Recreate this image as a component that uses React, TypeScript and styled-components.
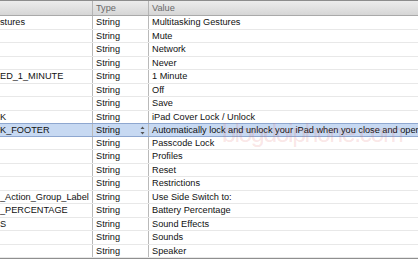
import styled, { createGlobalStyle } from "styled-components";

const GlobalStyle = createGlobalStyle`
  html, body { margin: 0; padding: 0; background: #ffffff; }
  body { width: 418px; height: 260px; overflow: hidden; }
`;

type Row = { key: string; type: string; value: string; selected?: boolean };

const rows: Row[] = [
  { key: "stures", type: "String", value: "Multitasking Gestures" },
  { key: "", type: "String", value: "Mute" },
  { key: "", type: "String", value: "Network" },
  { key: "", type: "String", value: "Never" },
  { key: "ED_1_MINUTE", type: "String", value: "1 Minute" },
  { key: "", type: "String", value: "Off" },
  { key: "", type: "String", value: "Save" },
  { key: "K", type: "String", value: "iPad Cover Lock / Unlock" },
  { key: "K_FOOTER", type: "String", value: "Automatically lock and unlock your iPad when you close and open the iPad cover.", selected: true },
  { key: "", type: "String", value: "Passcode Lock" },
  { key: "", type: "String", value: "Profiles" },
  { key: "", type: "String", value: "Reset" },
  { key: "", type: "String", value: "Restrictions" },
  { key: "_Action_Group_Label", type: "String", value: "Use Side Switch to:" },
  { key: "_PERCENTAGE", type: "String", value: "Battery Percentage" },
  { key: "S", type: "String", value: "Sound Effects" },
  { key: "", type: "String", value: "Sounds" },
  { key: "", type: "String", value: "Speaker" },
];

const Table = styled.div`
  position: relative;
  width: 418px;
  height: 260px;
  overflow: hidden;
  font-family: "Liberation Sans", Arial, sans-serif;
  font-size: 9.2px;
  color: #111;
  background: #fff;
`;

const Header = styled.div`
  display: grid;
  grid-template-columns: 92px 56px 1fr;
  height: 14px;
  border-top: 1px solid #8c8c8c;
  border-bottom: 1px solid #a9a9a9;
  background: linear-gradient(#ececec, #d6d6d6);
`;

const HeaderCell = styled.div<{ $first?: boolean }>`
  padding-left: 3px;
  line-height: 14px;
  color: #6a6a6a;
  border-left: ${(p) => (p.$first ? "none" : "1px solid #b4b4b4")};
`;

const Body = styled.div`
  display: flex;
  flex-direction: column;
  border-bottom: 1px solid #8f8f8f;
`;

const RowLine = styled.div<{ $selected?: boolean }>`
  display: grid;
  grid-template-columns: 92px 56px 1fr;
  height: 13.5px;
  box-sizing: border-box;
  border-bottom: 1px solid ${(p) => (p.$selected ? "#8ea7d0" : "#e8e8e8")};
  border-top: ${(p) => (p.$selected ? "1px solid #8ea7d0" : "none")};
  margin-top: ${(p) => (p.$selected ? "-1px" : "0")};
  background: ${(p) => (p.$selected ? "#c7d9f2" : "#fff")};
`;

const Cell = styled.div<{ $first?: boolean; $pad?: number }>`
  position: relative;
  padding-left: ${(p) => p.$pad ?? 3}px;
  line-height: 12.5px;
  white-space: nowrap;
  overflow: hidden;
  border-left: ${(p) => (p.$first ? "none" : "1px solid #b9b9b9")};
`;

const Stepper = styled.svg`
  position: absolute;
  right: 3px;
  top: 2px;
`;

const Watermark = styled.div`
  position: absolute;
  left: 222px;
  top: 119px;
  font-family: "Liberation Sans", sans-serif;
  font-size: 25px;
  letter-spacing: -1.5px;
  color: rgba(225, 110, 110, 0.18);
  pointer-events: none;
  white-space: nowrap;
`;

export default function App() {
  return (
    <Table>
      <GlobalStyle />
      <Header>
        <HeaderCell $first />
        <HeaderCell>Type</HeaderCell>
        <HeaderCell>Value</HeaderCell>
      </Header>
      <Body>
        {rows.map((r, i) => (
          <RowLine key={i} $selected={r.selected}>
            <Cell $first $pad={0}>{r.key}</Cell>
            <Cell>
              {r.type}
              {r.selected && (
                <Stepper width="5" height="9" viewBox="0 0 5 9">
                  <path d="M2.5 0.5 L4.5 3 L0.5 3 Z" fill="#555" />
                  <path d="M2.5 8.5 L4.5 6 L0.5 6 Z" fill="#555" />
                </Stepper>
              )}
            </Cell>
            <Cell>{r.value}</Cell>
          </RowLine>
        ))}
      </Body>
      <Watermark>blogdoiphone.com</Watermark>
    </Table>
  );
}
